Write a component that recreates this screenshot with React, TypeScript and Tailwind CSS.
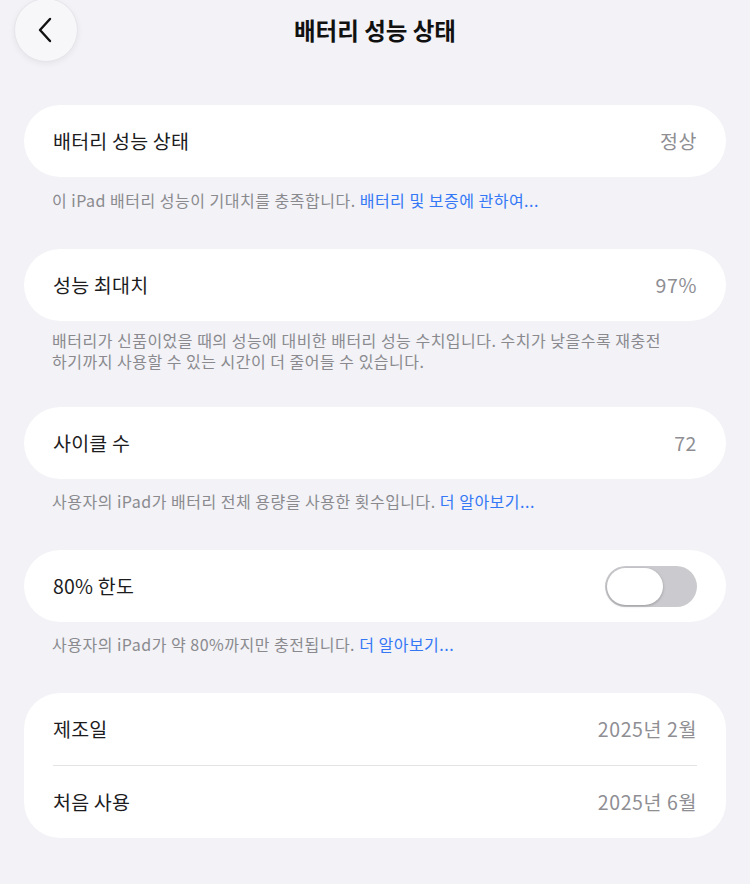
import React from "react";

const font = { fontFamily: '"Noto Sans CJK KR", "Noto Sans", sans-serif' };

function Card({ children }: { children: React.ReactNode }) {
    return <div className="mx-6 rounded-[36px] bg-white px-[29px]">{children}</div>;
}

function Row({ label, value, right }: { label: string; value?: string; right?: React.ReactNode }) {
    return (
        <div className="flex h-[72px] items-center justify-between">
            <span className="text-[19.5px] tracking-[0.2px] text-[#1c1c1e]">{label}</span>
            {right ?? <span className="text-[19.5px] tracking-[0.6px] text-[#8e8e93]">{value}</span>}
        </div>
    );
}

function Footer({ children, pt = "pt-[12px]" }: { children: React.ReactNode; pt?: string }) {
    return (
        <p className={`px-[52px] ${pt} text-[16px] leading-[21px] tracking-[0.5px] text-[#8a8a8e]`}>{children}</p>
    );
}

function Link({ children }: { children: React.ReactNode }) {
    return <span className="text-[#3478f6]">{children}</span>;
}

export default function App() {
    return (
        <div className="min-h-[884px] w-[750px] bg-[#f2f2f7]" style={font}>
            {/* header */}
            <div className="relative flex h-[62px] items-center justify-center">
                <button className="absolute left-[14px] top-[-2px] flex h-[64px] w-[64px] items-center justify-center rounded-full border border-[#e6e6ea] bg-[#f7f7fa] shadow-[0_2px_6px_rgba(0,0,0,0.06)]">
                    <svg width="22" height="26" viewBox="0 0 22 26">
                        <path d="M15 2 L5 13 L15 24" fill="none" stroke="#111" strokeWidth="2.4" strokeLinecap="round" strokeLinejoin="round" />
                    </svg>
                </button>
                <h1 className="text-[23.5px] font-bold text-[#111]">배터리 성능 상태</h1>
            </div>

            <div className="pt-[43px]">
                <Card>
                    <Row label="배터리 성능 상태" value="정상" />
                </Card>
                <Footer pt="pt-[13px]">
                    이 iPad 배터리 성능이 기대치를 충족합니다. <Link>배터리 및 보증에 관하여...</Link>
                </Footer>
            </div>

            <div className="pt-[38px]">
                <Card>
                    <Row label="성능 최대치" value="97%" />
                </Card>
                <Footer pt="pt-[9px]">
                    배터리가 신품이었을 때의 성능에 대비한 배터리 성능 수치입니다. 수치가 낮을수록 재충전
                    <br />
                    하기까지 사용할 수 있는 시간이 더 줄어들 수 있습니다.
                </Footer>
            </div>

            <div className="pt-[35px]">
                <Card>
                    <Row label="사이클 수" value="72" />
                </Card>
                <Footer>
                    사용자의 iPad가 배터리 전체 용량을 사용한 횟수입니다. <Link>더 알아보기...</Link>
                </Footer>
            </div>

            <div className="pt-[38px]">
                <Card>
                    <Row
                        label="80% 한도"
                        right={
                            <div className="flex h-[41px] w-[92px] items-center rounded-full bg-[#cbcbcf] p-[2px]">
                                <div className="h-[37px] w-[56px] rounded-full bg-white shadow-[0_1px_3px_rgba(0,0,0,0.25)]" />
                            </div>
                        }
                    />
                </Card>
                <Footer>
                    사용자의 iPad가 약 80%까지만 충전됩니다. <Link>더 알아보기...</Link>
                </Footer>
            </div>

            <div className="pt-[38px]">
                <Card>
                    <Row label="제조일" value="2025년 2월" />
                    <div className="h-px bg-[#e3e3e6]" />
                    <Row label="처음 사용" value="2025년 6월" />
                </Card>
            </div>
        </div>
    );
}
